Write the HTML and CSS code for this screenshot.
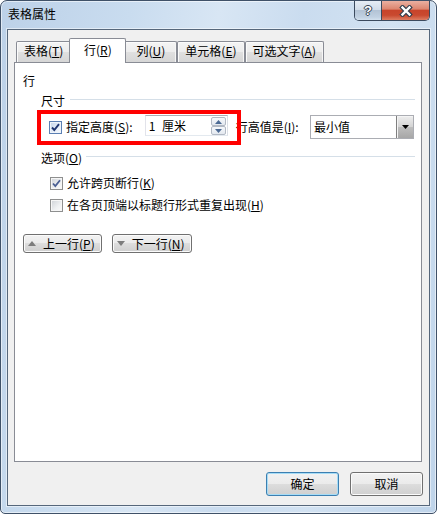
FILE: index.html
```html
<!DOCTYPE html>
<html lang="zh-CN">
<head>
<meta charset="utf-8">
<title>表格属性</title>
<link rel="stylesheet" href="styles.css">
</head>
<body>
<div class="window">
  <div class="titlebar">
    <div class="title">表格属性</div>
    <div class="caps">
      <div class="cap help">?</div>
      <div class="cap close">
        <svg width="14" height="12" viewBox="0 0 14 12"><path d="M3.5 2.5 L10.5 9.5 M10.5 2.5 L3.5 9.5" stroke="#33404f" stroke-width="4.6" stroke-linecap="square" fill="none"/><path d="M3.5 2.5 L10.5 9.5 M10.5 2.5 L3.5 9.5" stroke="#ffffff" stroke-width="2.4" stroke-linecap="square" fill="none"/></svg>
      </div>
    </div>
  </div>
  <div class="client">
    <div class="tabs">
      <div class="tab">表格(<u>T</u>)</div>
      <div class="tab active">行(<u>R</u>)</div>
      <div class="tab">列(<u>U</u>)</div>
      <div class="tab">单元格(<u>E</u>)</div>
      <div class="tab">可选文字(<u>A</u>)</div>
    </div>
    <div class="panel">
      <div class="heading">行</div>
      <div class="group-head"><span>尺寸</span><i class="sep"></i></div>
      <div class="size-row">
        <div class="check">
          <span class="box focus"><svg width="11" height="11" viewBox="0 0 11 11"><path d="M2 5.5 L4.3 8 L9 2.2" stroke="#1e3570" stroke-width="1.9" fill="none"/></svg></span>
          <span>指定高度(<u>S</u>):</span>
        </div>
        <div class="spin">
          <span class="spin-val">1 厘米</span>
          <div class="spin-btns">
            <span class="sb"><svg width="7" height="4" viewBox="0 0 7 4"><path d="M0 4 L3.5 0 L7 4 Z" fill="#4c6a94"/></svg></span>
            <span class="sb"><svg width="7" height="4" viewBox="0 0 7 4"><path d="M0 0 L3.5 4 L7 0 Z" fill="#4c6a94"/></svg></span>
          </div>
        </div>
        <span class="lbl">行高值是(<u>I</u>):</span>
        <div class="combo">
          <span class="combo-val">最小值</span>
          <span class="combo-btn"><svg width="7" height="4" viewBox="0 0 7 4"><path d="M0 0 L3.5 4 L7 0 Z" fill="#000"/></svg></span>
        </div>
        <div class="redbox"></div>
      </div>
      <div class="group-head opt-head"><span>选项(<u>O</u>)</span><i class="sep"></i></div>
      <div class="opts">
        <div class="check">
          <span class="box"><svg width="11" height="11" viewBox="0 0 11 11"><path d="M2 5.5 L4.3 8 L9 2.2" stroke="#4a5f93" stroke-width="1.8" fill="none"/></svg></span>
          <span>允许跨页断行(<u>K</u>)</span>
        </div>
        <div class="check">
          <span class="box"></span>
          <span>在各页顶端以标题行形式重复出现(<u>H</u>)</span>
        </div>
      </div>
      <div class="nav-btns">
        <div class="btn nav"><svg width="8" height="5" viewBox="0 0 8 5"><path d="M0 5 L4 0 L8 5 Z" fill="#7d7d7d"/></svg><span>上一行(<u>P</u>)</span></div>
        <div class="btn nav"><svg width="8" height="5" viewBox="0 0 8 5"><path d="M0 0 L4 5 L8 0 Z" fill="#7d7d7d"/></svg><span>下一行(<u>N</u>)</span></div>
      </div>
    </div>
    <div class="footer">
      <div class="btn fbtn default">确定</div>
      <div class="btn fbtn">取消</div>
    </div>
  </div>
</div>
</body>
</html>
```

FILE: styles.css
```css
html, body {
  margin: 0;
  padding: 0;
  background: #ffffff;
}
body {
  font-family: "Noto Sans CJK SC", "Microsoft YaHei", sans-serif;
  font-size: 12px;
  color: #000;
}
u {
  text-decoration: underline;
  text-underline-offset: 1px;
}

.window {
  width: 437px;
  height: 514px;
  box-sizing: border-box;
  border: 1px solid #3f5168;
  border-radius: 7px 7px 5px 5px;
  background: linear-gradient(100deg, #bcd1e8 0%, #c9dcef 25%, #d8e6f4 42%, #cadcef 58%, #d2e2f2 75%, #bfd4ea 100%);
  box-shadow: inset 0 0 0 1px rgba(255,255,255,0.55);
  display: flex;
  flex-direction: column;
  overflow: hidden;
}

.titlebar {
  height: 28px;
  display: flex;
  justify-content: space-between;
  align-items: flex-start;
  padding-left: 7px;
}
.title {
  margin-top: 5px;
  line-height: 16px;
}
.caps {
  display: flex;
  margin-right: 6px;
  height: 19px;
  border: 1px solid #3b4a5e;
  border-top: none;
  border-radius: 0 0 5px 5px;
  overflow: hidden;
}
.cap {
  display: flex;
  align-items: center;
  justify-content: center;
  height: 19px;
}
.help {
  width: 26px;
  background: linear-gradient(#e6edf5 0%, #d2dde9 45%, #b3c3d5 50%, #c1d1e2 85%, #d3e1ee 100%);
  font-family: "Liberation Sans", Arial, sans-serif;
  font-weight: bold;
  font-size: 13px;
  color: #fff;
  text-shadow: 0 0 1px #2e3b4b, 1px 0 0 #3a4758, -1px 0 0 #3a4758, 0 1px 0 #3a4758, 0 -1px 0 #3a4758;
}
.close {
  width: 47px;
  border-left: 1px solid #3b4a5e;
  background: linear-gradient(#eab0a1 0%, #dc8670 42%, #c8442b 50%, #c9492f 75%, #dd7d62 100%);
}

.client {
  margin: 0 6px 7px;
  flex: 1;
  border: 1px solid #56677b;
  box-shadow: 0 0 0 1px rgba(255,255,255,0.5);
  background: #f0f0f0;
  display: flex;
  flex-direction: column;
  padding: 8px 7px 9px 6px;
}

.tabs {
  display: flex;
  align-items: flex-end;
  height: 25px;
  padding-left: 2px;
  margin-bottom: -1px;
  position: relative;
  z-index: 1;
}
.tab {
  box-sizing: border-box;
  height: 21px;
  margin-bottom: 1px;
  min-width: 53px;
  padding: 0 7px;
  border: 1px solid #898c95;
  border-bottom: none;
  border-radius: 2px 2px 0 0;
  text-align: center;
  line-height: 18px;
  white-space: nowrap;
  background: linear-gradient(#f4f4f4 0%, #ededed 50%, #e0e0e0 50%, #d6d6d6 100%);
  box-shadow: inset 1px 1px 0 #fbfbfb, inset -1px 0 0 #f6f6f6;
}
.tab.active {
  height: 25px;
  margin: 0 -2px;
  min-width: 57px;
  padding: 0 9px;
  background: #ffffff;
  box-shadow: none;
  line-height: 22px;
  position: relative;
  z-index: 2;
}

.panel {
  flex: 1;
  border: 1px solid #898c95;
  background: #ffffff;
  padding: 10px 6px 0 8px;
  display: flex;
  flex-direction: column;
}
.heading {
  line-height: 16px;
}
.group-head {
  display: flex;
  align-items: flex-start;
  margin: 4px 0 0 18px;
  line-height: 16px;
}
.group-head .sep {
  flex: 1;
  height: 1px;
  margin: 6px 0 0 5px;
  background: #d5dfe8;
}
.opt-head {
  margin-top: 11px;
}
.opt-head .sep {
  margin-left: 4px;
}

.size-row {
  position: relative;
  display: flex;
  align-items: center;
  height: 24px;
  margin-top: 6px;
  padding-left: 26px;
}
.check {
  display: flex;
  align-items: center;
  gap: 4px;
  line-height: 16px;
  white-space: nowrap;
}
.box {
  box-sizing: border-box;
  width: 13px;
  height: 13px;
  border: 1px solid #8e8f8f;
  background: linear-gradient(135deg, #cdd1d6 0%, #eef0f2 60%, #fbfbfb 100%);
  box-shadow: inset 0 0 0 1px #f6f6f6;
  display: flex;
  align-items: center;
  justify-content: center;
}
.box.focus {
  border-color: #5b80b4;
  background: linear-gradient(135deg, #c3d4ea 0%, #e6eef8 60%, #f8fbfe 100%);
  box-shadow: inset 0 0 0 1px #eef4fb;
}
.box svg {
  display: block;
}

.spin {
  box-sizing: border-box;
  align-self: flex-start;
  width: 83px;
  height: 21px;
  margin-left: 12px;
  border: 1px solid #abadb3;
  border-color: #abadb3 #dbdfe6 #e3e9ef #e2e3ea;
  background: #fff;
  display: flex;
  justify-content: space-between;
}
.spin-val {
  padding-left: 3px;
  line-height: 19px;
  word-spacing: 4px;
}
.spin-btns {
  display: flex;
  flex-direction: column;
  margin: 1px 1px 0 0;
}
.sb {
  box-sizing: border-box;
  width: 15px;
  height: 9px;
  border: 1px solid #b2b9c4;
  border-radius: 2px;
  background: linear-gradient(#f6f8fb, #e3e8ef);
  display: flex;
  align-items: center;
  justify-content: center;
}
.sb svg {
  display: block;
}
.lbl {
  margin-left: 8px;
  line-height: 16px;
  white-space: nowrap;
}
.combo {
  box-sizing: border-box;
  width: 104px;
  height: 24px;
  margin-left: auto;
  margin-right: 1px;
  border: 1px solid #abadb3;
  background: #fff;
  display: flex;
  justify-content: space-between;
}
.combo-val {
  padding-left: 3px;
  line-height: 22px;
}
.combo-btn {
  width: 16px;
  border-left: 1px solid #7f7f7f;
  background: linear-gradient(#eeeeee 0%, #d3d3d3 50%, #bdbdbd 52%, #a7a7a7 100%);
  box-shadow: inset 1px 1px 0 #f4f4f4;
  display: flex;
  align-items: center;
  justify-content: center;
}
.combo-btn svg {
  display: block;
}
.redbox {
  position: absolute;
  left: 14px;
  top: -5px;
  width: 204px;
  height: 35px;
  box-sizing: border-box;
  border: 4px solid #ff0000;
  pointer-events: none;
}

.opts {
  display: flex;
  flex-direction: column;
  gap: 6px;
  margin-top: 9px;
  padding-left: 27px;
}

.nav-btns {
  display: flex;
  gap: 10px;
  margin-top: 21px;
}
.btn {
  box-sizing: border-box;
  border: 1px solid #707070;
  border-radius: 3px;
  background: linear-gradient(#f2f2f2 0%, #ebebeb 50%, #dddddd 50%, #cfcfcf 100%);
  box-shadow: inset 0 0 0 1px #fbfbfb;
  display: flex;
  align-items: center;
  line-height: 16px;
  white-space: nowrap;
}
.nav {
  height: 19px;
  gap: 7px;
  padding: 0 6px 0 4px;
}
.nav svg {
  display: block;
}

.footer {
  display: flex;
  justify-content: flex-end;
  gap: 11px;
  margin-top: 10px;
  margin-right: -1px;
}
.fbtn {
  width: 73px;
  height: 24px;
  justify-content: center;
}
.fbtn.default {
  border-color: #3c7fb1;
  box-shadow: inset 0 0 0 1px #a6dcf6;
}
```
